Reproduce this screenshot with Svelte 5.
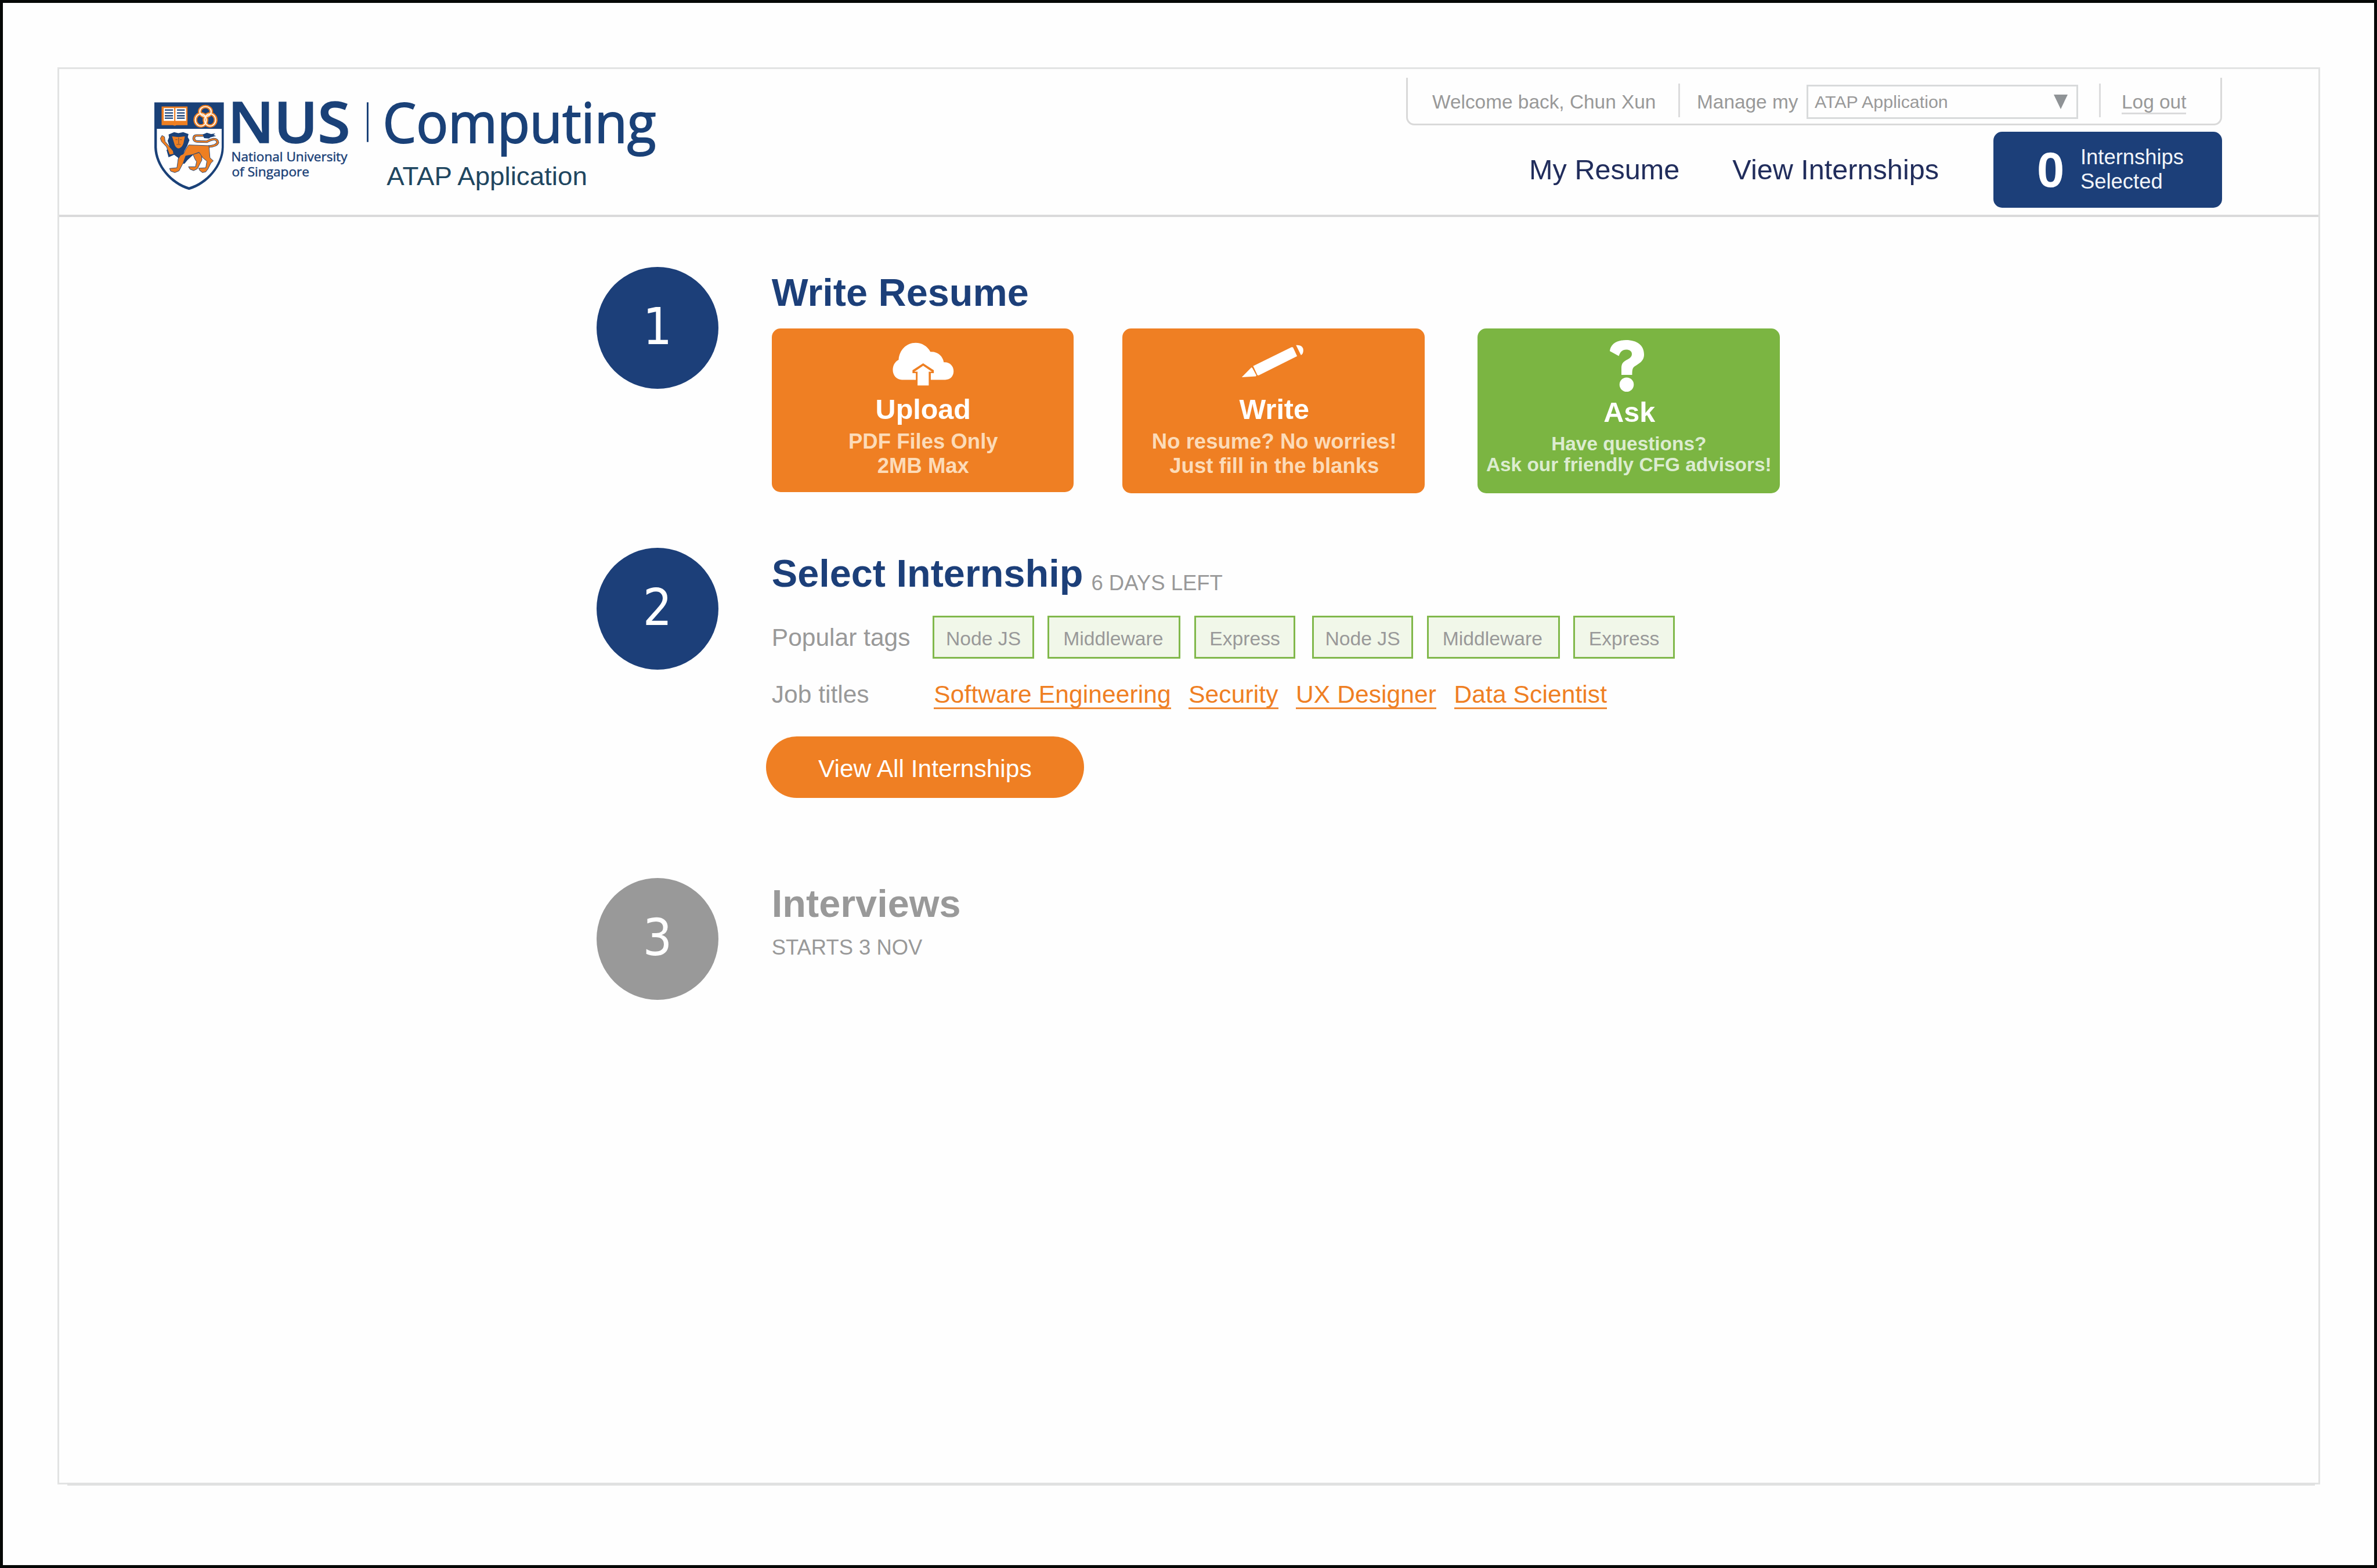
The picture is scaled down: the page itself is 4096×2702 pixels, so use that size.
<script>
  const tags = ['Node JS', 'Middleware', 'Express', 'Node JS', 'Middleware', 'Express'];
  const jobs = ['Software Engineering', 'Security', 'UX Designer', 'Data Scientist'];
</script>

<div class="page">
  <div class="frame">
    <header>
      <svg class="logo" viewBox="260 170 880 170">
        <svg x="266" y="176.3" width="119.8" height="151" viewBox="63 123 499 722" preserveAspectRatio="none">
          <path class="navy" d="M63 123H562V490C562 640 450 800 312 845C175 800 63 640 63 490Z" />
          <path fill="#fff" d="M81 342H546V490C544 640 438 778 312 822C187 778 83 640 81 490Z" />
          <!-- book -->
          <path class="orange" d="M115 158H301V312H222L209 317L196 312H115Z" />
          <path fill="#fff" d="M130 170H205V276H130ZM214 170H291V276H214Z" />
          <path stroke="#1a4178" stroke-width="11" d="M138 187H197M138 211H197M138 234H197M138 254H197M225 187H281M225 211H281M225 234H281M225 254H281" />
          <!-- interlocking rings -->
          <g fill="none" stroke="#ee7f22" stroke-width="27">
            <ellipse cx="430" cy="199" rx="41" ry="41" /><ellipse cx="397" cy="268" rx="40" ry="50" /><ellipse cx="463" cy="268" rx="40" ry="50" />
          </g>
          <g fill="none" stroke="#fff4e8" stroke-width="9">
            <ellipse cx="430" cy="199" rx="41" ry="41" /><ellipse cx="397" cy="268" rx="40" ry="50" /><ellipse cx="463" cy="268" rx="40" ry="50" />
          </g>
          <!-- lion -->
          <path class="navy" d="M165 388L205 369L235 377L270 369L308 385L303 410L315 435L305 462L300 480L280 520L268 560L250 600L232 612L234 580L205 556L165 576L150 515L175 500L158 440L168 412Z" />
          <path class="navy" d="M285 565L345 552L300 600L280 628L268 630Z" />
          <path fill="none" stroke="#1a4178" stroke-width="19" d="M452 487Q508 484 518 455Q515 426 490 426Q462 430 440 448L370 446Q346 442 346 420Q347 398 365 397H418" />
          <path fill="none" stroke="#ee7f22" stroke-width="12" d="M452 487Q508 484 518 455Q515 426 490 426Q462 430 440 448L370 446Q346 442 346 420Q347 398 365 397H418" />
          <path class="navy" d="M410 388L440 374L470 384L500 380L488 393L506 400L465 412L455 422L420 418Z" />
          <g class="orange" stroke="#1a4178" stroke-width="4" stroke-linejoin="round">
            <path d="M340 552L382 538L402 556L404 600L396 616L376 662L370 672L345 686L318 674L308 654L358 654L366 612L354 590Z" />
            <path d="M310 474L455 480L462 580L486 605L468 625L448 672L432 696L408 702L388 684L382 666L432 662L440 608L410 580L384 534L340 553L288 565L270 622L240 688L210 702L180 690L172 668L225 662L234 590L250 560L272 548L288 510Z" />
            <path d="M118 396L136 408L140 445L168 484L198 524L202 550L172 556L150 490L114 446L106 420Z" />
          </g>
          <path class="orange" d="M190 404L236 410L282 404L272 460Q262 498 236 503Q212 498 205 460Z" />
          <path fill="none" stroke="#8c5a3c" stroke-width="6" d="M214 430H228M246 430H260M237 415V465M222 470H252" />
        </svg>
        <g class="navy">
          <text class="nus" x="392.5" y="246.4" textLength="211" lengthAdjust="spacingAndGlyphs">NUS</text>
          <text class="uni" x="398.5" y="277.8" textLength="200" lengthAdjust="spacingAndGlyphs">National University</text>
          <text class="uni" x="399.5" y="304.3" textLength="133.5" lengthAdjust="spacingAndGlyphs">of Singapore</text>
          <rect x="632" y="176.3" width="3" height="68.4" />
          <text class="comp" x="659.5" y="245.500" textLength="471" lengthAdjust="spacingAndGlyphs">Computing</text>
        </g>
        <text class="atap" x="666.3" y="318.9" textLength="345.5" lengthAdjust="spacingAndGlyphs">ATAP Application</text>
      </svg>

      <div class="right">
        <div class="util">
          <span class="welcome">Welcome back, Chun Xun</span>
          <i class="sep"></i>
          <span class="manage">Manage my</span>
          <div class="select">
            <span>ATAP Application</span>
            <svg viewBox="0 0 24 25"><path d="M0 0H24L12 25Z" fill="#8f9396" /></svg>
          </div>
          <i class="sep"></i>
          <a class="logout">Log out</a>
        </div>
        <nav>
          <a class="resume">My Resume</a>
          <a class="view">View Internships</a>
          <div class="selected">
            <b>0</b>
            <span>Internships<br />Selected</span>
          </div>
        </nav>
      </div>
    </header>

    <main>
      <section class="step one">
        <div class="num">1</div>
        <div class="body">
          <h2>Write Resume</h2>
          <div class="cards">
            <div class="card upload">
              <svg class="icon" viewBox="0 0 600 450">
                <path fill="#fff" d="M125 351C82 350 50 315 50 270C50 230 70 200 98 186C104 108 160 47 238 47C290 47 335 75 360 121C418 116 462 155 470 207C516 202 551 236 551 280C551 322 524 351 482 351Z" />
                <path fill="#ee7f22" d="M300 215L388 273V297H363V360H236V297H212V273Z" />
                <path fill="#fff" d="M236 351H232V297H240V351ZM300 236L372 284H346V398H254V284H228Z" />
              </svg>
              <h3>Upload</h3>
              <p>PDF Files Only<br />2MB Max</p>
            </div>
            <div class="card write">
              <svg class="icon" viewBox="0 0 600 450">
                <g fill="#fff">
                  <path d="M42 330L122 249L130 256L162 314L158 323Z" />
                  <path d="M136 238L452 83L464 84L498 157L180 316L170 312Z" />
                  <path d="M489 66C530 62 552 82 549 112C548 130 542 142 530 148Z" />
                </g>
              </svg>
              <h3>Write</h3>
              <p>No resume? No worries!<br />Just fill in the blanks</p>
            </div>
            <div class="card ask">
              <svg class="qmark" viewBox="0 0 75 89">
                <path fill="#fff" d="M8 19C9 8 19 0 36 0C55 0 67 9 67 25C67 37 57 41 50 46C47 48.500 46.500 52 46.500 60H28V48C28 38 34 36 41 32C45 29 46 27 46 24C46 19 42 16.500 36 16.500C30 16.500 26 20 23.500 27.500Z" />
                <circle cx="37" cy="76.700" r="12.300" fill="#fff" />
              </svg>
              <h3>Ask</h3>
              <p>Have questions?<br />Ask our friendly CFG advisors!</p>
            </div>
          </div>
        </div>
      </section>

      <section class="step two">
        <div class="num">2</div>
        <div class="body">
          <div class="title"><h2>Select Internship</h2><span>6 DAYS LEFT</span></div>
          <div class="row tags">
            <label>Popular tags</label>
            {#each tags as tag}
              <span class="tag" class:wide={tag === 'Middleware'}>{tag}</span>
            {/each}
          </div>
          <div class="row jobs">
            <label>Job titles</label>
            {#each jobs as job}
              <a>{job}</a>
            {/each}
          </div>
          <button>View All Internships</button>
        </div>
      </section>

      <section class="step three">
        <div class="num">3</div>
        <div class="body">
          <h2>Interviews</h2>
          <p class="starts">STARTS 3 NOV</p>
        </div>
      </section>
    </main>
    <div class="base"></div>
  </div>
</div>

<style>
  :global(body) { background: #fefefe; overflow: hidden; }
  * { box-sizing: border-box; }
  h2, h3, p { margin: 0; }
  .page {
    width: 4096px; height: 2702px;
    border: 5px solid #060807;
    padding: 111px 93px 0 94px;
    background: #fefefe;
    font-family: "Liberation Sans", Arial, sans-serif;
    color: #999;
    white-space: nowrap;
  }
  .frame {
    height: 2442px;
    border: 3px solid #e2e3e3;
    display: flex; flex-direction: column;
  }
  .base { height: 5px; flex: none; margin: auto 6px -5px 14px; background: #e0e1e1; }

  header {
    flex: none; height: 255px;
    display: flex; justify-content: space-between;
    border-bottom: 4px solid #dadadb;
    padding: 0 166px 0 158px;
  }
  .logo { width: 880px; height: 170px; margin-top: 51px; overflow: visible; }
  .navy { fill: #1a4178; }
  .orange { fill: #ee7f22; }
  .nus { font: 600 97.500px "Open Sans", sans-serif; stroke: #1a4178; stroke-width: 1.500px; }
  .uni { font: 500 21.800px "Open Sans", sans-serif; stroke: #1a4178; stroke-width: 0.500px; }
  .comp { font: 500 96px "Open Sans", sans-serif; stroke: #1a4178; stroke-width: 2px; }
  .atap { font-size: 45px; fill: #1f4660; }

  .right { display: flex; flex-direction: column; align-items: flex-end; }
  .util {
    width: 1406px; height: 82px; margin-top: 15px;
    border: 3px solid #d9d9d9; border-top: 0;
    border-radius: 0 0 14px 14px;
    display: flex; align-items: flex-start;
    font-size: 33.400px; line-height: 83px;
  }
  .welcome { width: 466px; padding-left: 42px; }
  .sep { width: 3px; height: 58px; margin-top: 10px; background: #dcdcdd; }
  .manage { width: 218px; padding-left: 29px; }
  .select {
    width: 468px; height: 59px; margin: 12px 36px 0 0;
    border: 3px solid #d8dadb;
    display: flex; justify-content: space-between; align-items: center;
    padding: 0 15px 0 11px;
    font-size: 30.400px; line-height: 59px;
  }
  .select svg { width: 24px; height: 25px; margin-bottom: 1px; }
  .logout { margin-left: 36px; height: 63px; border-bottom: 3px solid #dadadb; }

  nav { display: flex; align-items: center; margin-top: 10.500px; font-size: 48.600px; color: #212d5c; height: 131px; }
  .resume { margin-right: 91px; }
  .view { margin-right: 94px; }
  .selected {
    width: 394px; height: 131px; border-radius: 15px;
    background: #1c3f79; color: #fff;
    display: flex; align-items: center; padding-left: 75px;
  }
  .selected b { font-size: 85px; line-height: 131px; width: 75px; }
  .selected span { font-size: 36.400px; line-height: 42px; color: #f2f5f9; }

  main { padding: 86px 0 0 926px; }
  .step { display: flex; gap: 91.800px; }
  .one { height: 484px; }
  .two { height: 569.400px; }
  .num {
    flex: none; width: 210px; height: 210px; border-radius: 50%;
    background: #1c3f79; color: #fff;
    font: 88px/206px "DejaVu Sans Condensed", "DejaVu Sans", sans-serif; font-stretch: condensed;
    text-align: center;
  }
  .three .num { background: #999; }
  h2 { font-size: 66.600px; line-height: 80px; padding-top: 4px; color: #1c3f79; }
  .three h2 { color: #999; }
  .cards { display: flex; margin-top: 21.600px; }
  .card {
    width: 521px; height: 284px; border-radius: 15px;
    background: #ef7f23; color: #fcdbb8;
    display: flex; flex-direction: column; align-items: center;
    font-weight: bold; font-size: 36.500px; line-height: 42.600px; text-align: center;
  }
  .upload { width: 520px; height: 282px; margin-right: 84.500px; padding-left: 2px; }
  .write { margin-right: 91px; padding-left: 2px; }
  .ask { background: #7bb542; color: #dcecd0; font-size: 33.400px; line-height: 36.300px; }
  .icon { width: 125.500px; height: 94.100px; margin-top: 15px; }
  .write .icon { margin-right: 4px; }
  h3 { font-size: 48.500px; line-height: 56px; color: #fff; }
  .upload h3, .write h3 { margin: 2px 0 7px; }
  .ask h3 { margin: 7px 0 9px 2px; }
  .qmark { width: 75px; height: 89px; margin: 20px 6px 0 0; }

  .title { display: flex; }
  .title span { font-size: 36.500px; line-height: 40px; margin: 40.500px 0 0 14px; }
  .row { display: flex; }
  .row label { width: 277px; font-size: 42.500px; flex: none; }
  .tags { margin-top: 32.500px; gap: 23.500px; line-height: 75px; }
  .tags label { margin-right: -23px; }
  .tag {
    width: 174.500px; height: 74.500px;
    border: 3px solid #81b84b; background: #f1f7e9;
    font-size: 33.700px; line-height: 72px; text-align: center;
  }
  .wide { width: 229px; padding-right: 3px; }
  .tag:nth-of-type(4) { margin-left: 5px; }
  .jobs { margin-top: 36px; gap: 30.500px; line-height: 49px; }
  .jobs label { margin-right: -28px; }
  .jobs a { height: 50px; font-size: 42.500px; letter-spacing: 0.100px; color: #ef7f23; border-bottom: 3.500px solid #f08a36; }
  button {
    display: block; width: 548px; height: 106.500px; margin: 47px 0 0 -10px; padding: 0;
    border: 0; border-radius: 53px; background: #ef7f23; color: #fff;
    font: 42.500px/112px "Liberation Sans", Arial, sans-serif;
  }
  .starts { font-size: 36.400px; line-height: 40px; margin-top: 15.300px; }
</style>
